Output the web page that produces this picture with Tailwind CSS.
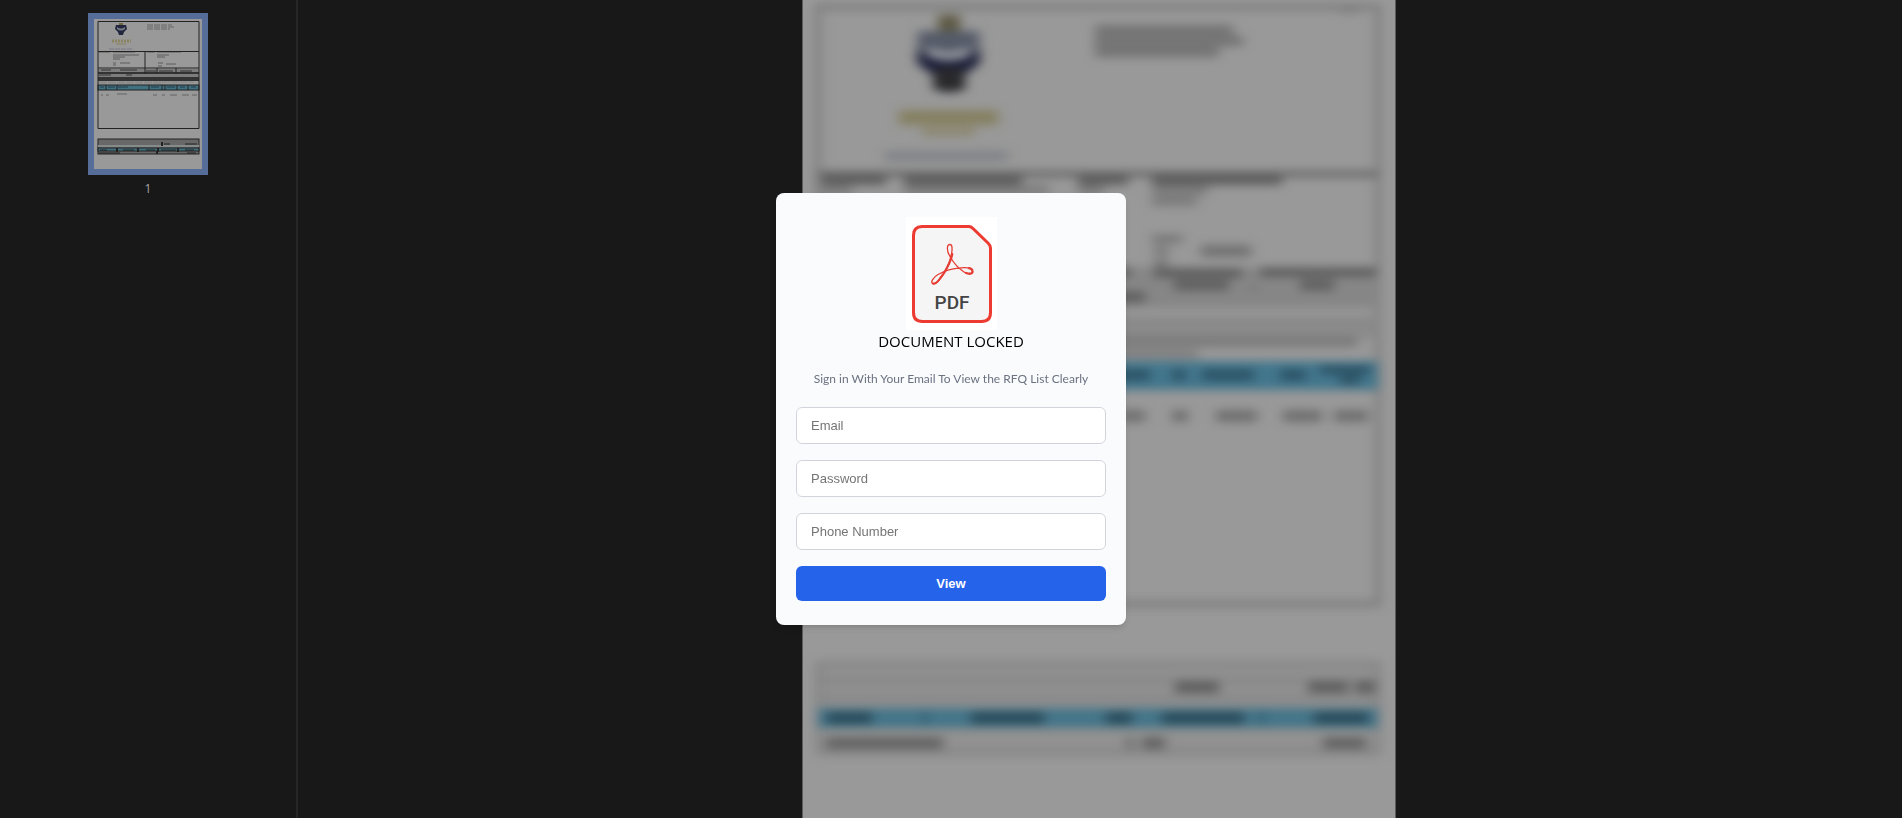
<!DOCTYPE html>
<html lang="en">
<head>
    <meta charset="UTF-8" />
    <meta name="viewport" content="width=device-width, initial-scale=1.0" />
    <title>Document Locked</title>

    <script src="https://cdn.jsdelivr.net/npm/@tailwindcss/browser@4"></script>
</head>
<body class="bg-[#181818] font-['Open_Sans','Noto_Sans',sans-serif]">

    <div class="flex h-screen overflow-hidden">

        <!-- Page thumbnails -->
        <aside class="w-[298px] shrink-0 border-r-2 border-[#262626] flex flex-col items-center pt-[13px]">
            <div class="bg-[#576d99] p-1.5">
                <svg class="block w-[108px] h-[150px]" viewBox="0 0 108 150" aria-hidden="true">
                    <rect width="108" height="150" fill="#999" />
                    <path d="M22 6h10l1 4-3 3-1 3h-4l-1-3-3-3z" fill="#22263c" />
                    <rect x="25" y="4" width="4" height="2" fill="#6d673f" />
                    <path d="M23 8q4 3 8 0v2q-4 3-8 0z" fill="#777d88" />
                    <path d="M18 22h19" stroke="#8a835f" stroke-width="3" stroke-dasharray="2 1" />
                    <path d="M22 25h10" stroke="#8a835f" />
                    <path d="M15 30h24" stroke="#777b85" stroke-dasharray="5 1" />
                    <path d="M53 6h25M53 8h27M53 10h23" stroke="#666" stroke-dasharray="6 1" />
                    <path d="M5 33h11M19 33h22M53 33h8M63 33h24M19 36h26M63 36h12M19 38h12M63 38h8M19 40h7M19 44h3M26 44h10M19 46h3M64 44h5M72 45h10M64 47h4" stroke="#5c5c5c" />
                    <rect x="4" y="50" width="101" height="12" fill="#7c7c7c" />
                    <path d="M4 54h101M4 59h101M4 61h101" stroke="#333" stroke-width="2" />
                    <path d="M7 51h10M26 51h17M52 52h10M65 52h14M86 52h12M5 56h12M32 56h6" stroke="#333" />
                    <path d="M4 49h101M51 32v23M63 49v5M82 49v5" stroke="#222" />
                    <path d="M5 63h95M5 64h64" stroke="#858585" stroke-dasharray="8 1" />
                    <rect x="4" y="66" width="101" height="5" fill="#417080" stroke="#222" />
                    <path d="M12 66v5M23 66v5M55 66v5M68 66v5M71 66v5M83 66v5M94 66v5" stroke="#222" />
                    <path d="M6 68h4M14 68h7M24 68h10M57 68h8M73 68h8M86 68h5M97 68h5" stroke="#203d4a" />
                    <path d="M7 76h2M12 76h3M23 75h10M59 76h4M68 76h3M76 76h7M88 76h7M98 76h5" stroke="#626262" />
                    <path d="M4 2.500h101v107h-101zM4 32.500h101" fill="none" stroke="#222" />
                    <rect x="4" y="120" width="101" height="15" fill="#686868" stroke="#222" />
                    <rect x="4" y="126" width="101" height="2" fill="#858b8b" />
                    <rect x="4" y="129" width="101" height="3" fill="#417080" stroke="#222" />
                    <path d="M68 123v4M23 129v4M44 129v4M64 129v4M84 129v4M63 132v3" stroke="#222" stroke-width="2" />
                    <path d="M70 125h6M91 125h12M6 131h7M29 131h11M52 131h9M67 131h15M91 131h9M5 134h21M93 134h9" stroke="#222" />
                </svg>
            </div>
            <span class="mt-1 text-xs leading-5 text-[#a6a6a6]">1</span>
        </aside>

        <!-- Blurred page -->
        <main class="flex-1 flex justify-center pr-0.5">
            <svg class="block w-[594px] h-[818px] shrink-0" viewBox="0 0 594 818" aria-hidden="true">
                <defs>
                    <filter id="soft" filterUnits="userSpaceOnUse" x="-20" y="-20" width="634" height="858" color-interpolation-filters="sRGB">
                        <feGaussianBlur stdDeviation="6 5" />
                    </filter>
                </defs>
                <rect width="594" height="818" fill="#999" />
                <g filter="url(#soft)">
                    <!-- frame and section rules -->
                    <path d="M16 7h560v597h-560z" fill="none" stroke="#7d7d7d" stroke-width="6" />
                    <path d="M16 174h560" stroke="#666" stroke-width="6" />
                    <rect x="16" y="267" width="560" height="41" fill="#868686" />
                    <rect x="16" y="316" width="560" height="22" fill="#8a8a8a" />

                    <!-- logo -->
                    <rect x="136" y="15" width="22" height="16" fill="#5e5a44" />
                    <path d="M116 31h61l1 24-17 15 3 18q-17 9-34 0l3-17-18-15z" fill="#555b68" />
                    <path d="M115 50q31 21 63 0v13l-18 14h-27l-18-14z" fill="#1b1e38" />
                    <path d="M133 68h28l3 20q-16 8-33 0z" fill="#29292c" />
                    <path d="M126 47q21 11 41 0v9q-20 8-41 0z" fill="#a0a3aa" />
                    <rect x="97" y="110" width="99" height="15" fill="#858061" />
                    <rect x="120" y="127" width="53" height="9" fill="#8c8770" />
                    <rect x="83" y="151" width="123" height="10" fill="#808287" />

                    <!-- header text -->
                    <path d="M293 30h138M293 41h148M293 52h124" stroke="#727272" stroke-width="10" />
                    <path d="M538 9h18" stroke="#7d7d7d" stroke-width="8" />

                    <!-- addresses -->
                    <path d="M20 180h64M102 180h118M276 180h50M350 180h130" stroke="#5e5e5e" stroke-width="10" />
                    <path d="M20 190h30M102 190h145M276 190h26M350 190h56M350 201h45" stroke="#7b7b7b" stroke-width="10" />
                    <path d="M350 239h30M352 251h14M352 263h14" stroke="#747474" stroke-width="8" />
                    <path d="M399 251h50" stroke="#727272" stroke-width="12" />
                    <path d="M308 272h20M352 273h88M458 272h116" stroke="#5d5d5d" stroke-width="9" />
                    <path d="M372 285h55M498 285h34M298 297h45" stroke="#606060" stroke-width="11" />
                    <path d="M449 288h5" stroke="#747474" stroke-width="8" />
                    <path d="M20 342h536" stroke="#787878" stroke-width="9" />
                    <path d="M20 354h376" stroke="#7c7c7c" stroke-width="8" />

                    <!-- item table -->
                    <rect x="16" y="361" width="560" height="29" fill="#43778d" />
                    <path d="M305 375h43M370 375h14M400 375h52M478 375h26" stroke="#2c5265" stroke-width="11" />
                    <path d="M518 370h50M538 380h20" stroke="#2c5265" stroke-width="9" />
                    <path d="M318 416h25M370 416h16M414 416h41M481 416h39M532 416h34" stroke="#707070" stroke-width="12" />

                    <!-- totals -->
                    <rect x="16" y="662" width="560" height="92" fill="#919191" />
                    <path d="M16 664h560M16 681h560M16 698h560M16 753h560" stroke="#868686" stroke-width="6" />
                    <path d="M16 662v92M576 662v92" stroke="#7c7c7c" stroke-width="4" />
                    <path d="M373 687h44M506 687h40M553 687h20" stroke="#606060" stroke-width="12" />
                    <rect x="16" y="708" width="560" height="20" fill="#447589" />
                    <path d="M25 718h45M169 718h73M304 718h26M360 718h82M512 718h54" stroke="#294b5a" stroke-width="12" />
                    <path d="M121 718h4M458 718h4" stroke="#2f5a6d" stroke-width="15" />
                    <path d="M24 743h117M325 743h6M340 743h23M521 743h43" stroke="#646464" stroke-width="12" />
                </g>
                <path d="M.5 0v818M593.500 0v818" stroke="#5c5c5c" />
            </svg>
        </main>

    </div>

    <!-- Dialog -->
    <div class="fixed inset-0 flex items-center justify-center">
        <div role="dialog" aria-labelledby="title" class="w-[350px] bg-[#f9fbfd] rounded-lg shadow-md px-5 py-6 text-center">
            <svg class="block mx-auto w-[91px] h-[113px]" viewBox="0 0 91 113" role="img" aria-label="PDF">
                <rect width="91" height="113" fill="#fff" />
                <path d="M16 9.500H63Q65 9.500 67 11.500L82 26Q84.500 28.500 84.500 31V95.500Q84.500 104.500 75.500 104.500H16.500Q7.500 104.500 7.500 95.500V18.500Q7.500 9.500 16 9.500Z" fill="#f5f5f5" stroke="#ed3b31" stroke-width="3" />
                <path d="M44 27.500C40.500 27.500 40.500 34 44 39.500C47 45 52 51 58 55C63 58 67 57 66.500 54C66 50.500 60 50.500 55 50.800C47 51.300 38 54 32 57.500C27 60.500 24.500 65 26.500 66.500C30 68.500 36 60 40.500 52C45 43 48.500 27.500 44 27.500Z" fill="none" stroke="#e63d35" stroke-width="1.300" stroke-linejoin="round" />
                <path d="M46.300 37C45 44 39 56 34 61.500M60 56C64 57.500 67 56.500 66.500 54C66.300 52.500 65 51.500 63 51.200M27 66.500C29 67 32 64.500 34 61.500" fill="none" stroke="#e63d35" stroke-width="2.200" stroke-linecap="round" />
                <text x="46" y="92" text-anchor="middle" class="font-['Roboto',sans-serif] text-[19px] font-medium" fill="#444">PDF</text>
            </svg>
            <h1 id="title" class="text-[15px] leading-[22px] text-black">DOCUMENT LOCKED</h1>
            <p class="mt-[18px] text-xs leading-[18px] font-['Lato','Open_Sans',sans-serif] text-[#6b7280]">Sign in With Your Email To View the RFQ List Clearly</p>
            <form class="mt-[19px] flex flex-col gap-4 font-['Liberation_Sans',sans-serif] text-[13px] leading-[15px]">
                <input type="email" placeholder="Email" aria-label="Email" class="w-full rounded-md border border-[#d1d5db] bg-white px-3.5 py-2.5 placeholder:text-[#757575]" />
                <input type="password" placeholder="Password" aria-label="Password" class="w-full rounded-md border border-[#d1d5db] bg-white px-3.5 py-2.5 placeholder:text-[#757575]" />
                <input type="tel" placeholder="Phone Number" aria-label="Phone Number" class="w-full rounded-md border border-[#d1d5db] bg-white px-3.5 py-2.5 placeholder:text-[#757575]" />
                <button type="button" class="w-full rounded-md bg-[#2563eb] py-2.5 font-bold text-white">View</button>
            </form>
        </div>
    </div>

</body>
</html>
